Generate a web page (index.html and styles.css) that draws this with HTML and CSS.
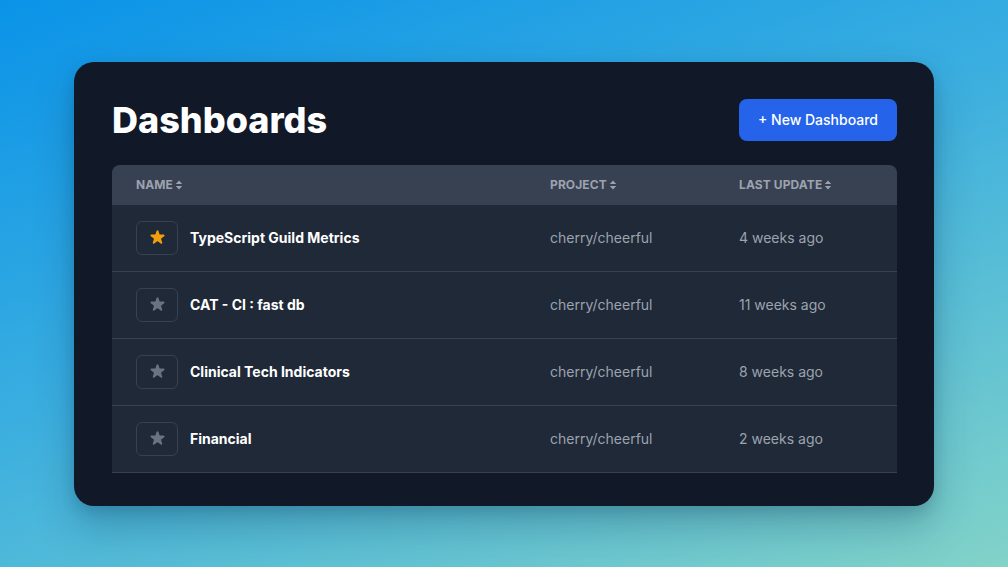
FILE: index.html
```html
<!DOCTYPE html>
<html lang="en">
<head>
<meta charset="utf-8">
<title>Dashboards</title>
<link rel="stylesheet" href="styles.css">
</head>
<body>
<main class="page">
  <section class="card">
    <header class="card-head">
      <h1 class="title">Dashboards</h1>
      <button class="btn-new">+ New Dashboard</button>
    </header>
    <div class="table">
      <div class="row head">
        <div class="cell c-name">Name <svg class="sort" viewBox="0 0 8 10"><path d="M4 0.5 L7.2 4 H0.8 Z M4 9.5 L7.2 6 H0.8 Z"/></svg></div>
        <div class="cell">Project <svg class="sort" viewBox="0 0 8 10"><path d="M4 0.5 L7.2 4 H0.8 Z M4 9.5 L7.2 6 H0.8 Z"/></svg></div>
        <div class="cell">Last update <svg class="sort" viewBox="0 0 8 10"><path d="M4 0.5 L7.2 4 H0.8 Z M4 9.5 L7.2 6 H0.8 Z"/></svg></div>
      </div>
      <div class="row">
        <div class="cell c-name"><span class="star-btn on"><svg viewBox="0 0 20 20"><path d="M9.05 2.93c.3-.92 1.6-.92 1.9 0l1.07 3.29a1 1 0 0 0 .95.69h3.46c.97 0 1.37 1.24.59 1.81l-2.8 2.03a1 1 0 0 0-.36 1.12l1.07 3.29c.3.92-.76 1.69-1.54 1.12l-2.8-2.03a1 1 0 0 0-1.18 0l-2.8 2.03c-.78.57-1.84-.2-1.54-1.12l1.07-3.29a1 1 0 0 0-.36-1.12L2.98 8.72c-.78-.57-.38-1.81.59-1.81h3.46a1 1 0 0 0 .95-.69l1.07-3.290z"/></svg></span><span class="name">TypeScript Guild Metrics</span></div>
        <div class="cell muted">cherry/cheerful</div>
        <div class="cell muted">4 weeks ago</div>
      </div>
      <div class="row">
        <div class="cell c-name"><span class="star-btn"><svg viewBox="0 0 20 20"><path d="M9.05 2.93c.3-.92 1.6-.92 1.9 0l1.07 3.29a1 1 0 0 0 .95.69h3.46c.97 0 1.37 1.24.59 1.81l-2.8 2.03a1 1 0 0 0-.36 1.12l1.07 3.29c.3.92-.76 1.69-1.54 1.12l-2.8-2.03a1 1 0 0 0-1.18 0l-2.8 2.03c-.78.57-1.84-.2-1.54-1.12l1.07-3.29a1 1 0 0 0-.36-1.12L2.98 8.72c-.78-.57-.38-1.81.59-1.81h3.46a1 1 0 0 0 .95-.69l1.07-3.29z"/></svg></span><span class="name">CAT - CI : fast db</span></div>
        <div class="cell muted">cherry/cheerful</div>
        <div class="cell muted">11 weeks ago</div>
      </div>
      <div class="row">
        <div class="cell c-name"><span class="star-btn"><svg viewBox="0 0 20 20"><path d="M9.05 2.93c.3-.92 1.6-.92 1.9 0l1.07 3.29a1 1 0 0 0 .95.69h3.46c.97 0 1.37 1.24.59 1.81l-2.8 2.03a1 1 0 0 0-.36 1.12l1.07 3.29c.3.92-.76 1.69-1.54 1.12l-2.8-2.03a1 1 0 0 0-1.18 0l-2.8 2.03c-.78.57-1.84-.2-1.54-1.12l1.07-3.29a1 1 0 0 0-.36-1.12L2.98 8.72c-.78-.57-.38-1.81.59-1.81h3.46a1 1 0 0 0 .95-.69l1.07-3.29z"/></svg></span><span class="name">Clinical Tech Indicators</span></div>
        <div class="cell muted">cherry/cheerful</div>
        <div class="cell muted">8 weeks ago</div>
      </div>
      <div class="row">
        <div class="cell c-name"><span class="star-btn"><svg viewBox="0 0 20 20"><path d="M9.05 2.93c.3-.92 1.6-.92 1.9 0l1.07 3.29a1 1 0 0 0 .95.69h3.46c.97 0 1.37 1.24.59 1.81l-2.8 2.03a1 1 0 0 0-.36 1.12l1.07 3.29c.3.92-.76 1.69-1.54 1.12l-2.8-2.03a1 1 0 0 0-1.18 0l-2.8 2.03c-.78.57-1.84-.2-1.54-1.12l1.07-3.29a1 1 0 0 0-.36-1.12L2.98 8.72c-.78-.57-.38-1.81.59-1.81h3.46a1 1 0 0 0 .95-.69l1.07-3.29z"/></svg></span><span class="name">Financial</span></div>
        <div class="cell muted">cherry/cheerful</div>
        <div class="cell muted">2 weeks ago</div>
      </div>
    </div>
  </section>
</main>
</body>
</html>
```
FILE: styles.css
```css
* { box-sizing: border-box; }
html, body { margin: 0; padding: 0; }
body {
  width: 1008px;
  height: 567px;
  overflow: hidden;
  font-family: Inter, "Noto Sans", sans-serif;
  background: linear-gradient(160deg, #0a93e8 0%, #3aaee0 45%, #82d3c8 100%);
}
.page {
  height: 567px;
  display: flex;
  align-items: center;
  justify-content: center;
}
.card {
  width: 860px;
  height: 444px;
  background: #111827;
  border-radius: 20px;
  padding: 37px 37px 0 38px;
  box-shadow: 0 20px 40px rgba(0, 40, 70, 0.25), 0 6px 14px rgba(0, 40, 70, 0.15);
}
.card-head {
  display: flex;
  align-items: center;
  justify-content: space-between;
  height: 42px;
  margin-bottom: 24px;
}
.title {
  margin: 0;
  color: #fff;
  font-size: 36px;
  font-weight: 800;
  letter-spacing: 0;
  line-height: 42px;
}
.btn-new {
  height: 42px;
  width: 158px;
  border: 0;
  border-radius: 8px;
  background: #2563eb;
  color: #fff;
  font-family: inherit;
  font-size: 14px;
  font-weight: 500;
  padding: 0;
}
.table {
  width: 785px;
  border-radius: 8px 8px 0 0;
  overflow: hidden;
  background: #1f2937;
}
.row {
  display: grid;
  grid-template-columns: 438px 189px 1fr;
  align-items: center;
  height: 67px;
  border-bottom: 1px solid #374151;
}
.row.head {
  height: 40px;
  background: #374151;
  border-bottom: 0;
}
.cell {
  display: flex;
  align-items: center;
  font-size: 14px;
  color: #fff;
}
.c-name { padding-left: 24px; }
.head .cell {
  font-size: 12px;
  font-weight: 700;
  color: #9ca3af;
  text-transform: uppercase;
  letter-spacing: 0.1px;
}
.sort {
  width: 8px;
  height: 10px;
  margin-left: 2px;
  fill: #9ca3af;
}
.muted { color: #9ca3af; }
.star-btn {
  width: 42px;
  height: 34px;
  border: 1px solid #374151;
  border-radius: 6px;
  display: flex;
  align-items: center;
  justify-content: center;
  margin-right: 12px;
}
.star-btn svg {
  width: 19px;
  height: 19px;
  fill: #6b7280;
}
.star-btn.on svg { fill: #f59e0b; }
.name { font-weight: 700; }
```
